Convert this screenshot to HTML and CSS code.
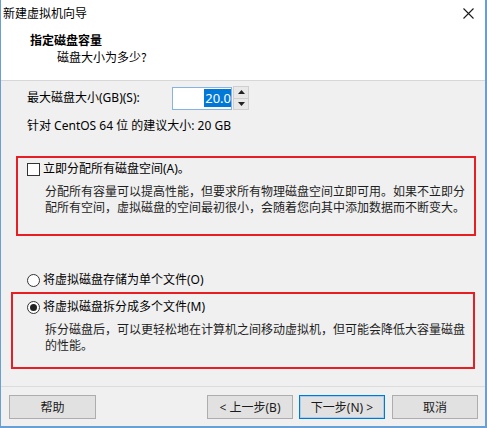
FILE: index.html
```html
<!DOCTYPE html>
<html lang="zh-CN">
<head>
<meta charset="utf-8">
<title>新建虚拟机向导</title>
<link rel="stylesheet" href="styles.css">
</head>
<body>
<div class="window">
  <div class="titlebar">
    <span class="title">新建虚拟机向导</span>
    <span class="close"><svg width="11" height="11" viewBox="0 0 11 11"><path d="M0.5 0.5 L10.5 10.5 M10.5 0.5 L0.5 10.5" stroke="#1a1a1a" stroke-width="1.1" fill="none"/></svg></span>
  </div>
  <div class="header">
    <div class="h-title">指定磁盘容量</div>
    <div class="h-sub">磁盘大小为多少?</div>
  </div>
  <div class="body">
    <div class="size-row">
      <span class="size-label">最大磁盘大小(GB)(S):</span>
      <div class="spin-input"><span class="sel">20.0</span></div>
      <div class="spin-btns">
        <div class="spin-btn"><svg width="7" height="4" viewBox="0 0 7 4"><path d="M0 4 L3.5 0 L7 4 Z" fill="#222"/></svg></div>
        <div class="spin-btn"><svg width="7" height="4" viewBox="0 0 7 4"><path d="M0 0 L3.5 4 L7 0 Z" fill="#222"/></svg></div>
      </div>
    </div>
    <div class="recommend">针对 CentOS 64 位 的建议大小: 20 GB</div>
    <div class="box box1">
      <div class="opt opt1"><span class="check"></span><span class="opt-label">立即分配所有磁盘空间(A)。</span></div>
      <div class="desc desc1">分配所有容量可以提高性能，但要求所有物理磁盘空间立即可用。如果不立即分<br>配所有空间，虚拟磁盘的空间最初很小，会随着您向其中添加数据而不断变大。</div>
    </div>
    <div class="opt radio-row"><span class="radio"></span><span class="opt-label">将虚拟磁盘存储为单个文件(O)</span></div>
    <div class="box box2">
      <div class="opt opt2"><span class="radio checked"></span><span class="opt-label">将虚拟磁盘拆分成多个文件(M)</span></div>
      <div class="desc desc2">拆分磁盘后，可以更轻松地在计算机之间移动虚拟机，但可能会降低大容量磁盘<br>的性能。</div>
    </div>
  </div>
  <div class="footer">
    <div class="btn btn-help">帮助</div>
    <div class="btn btn-prev">&lt; 上一步(B)</div>
    <div class="btn btn-next">下一步(N) &gt;</div>
    <div class="btn btn-cancel">取消</div>
  </div>
</div>
</body>
</html>
```
FILE: styles.css
```css
html, body {
  margin: 0;
  padding: 0;
  background: #ffffff;
}
body {
  font-family: "Noto Sans", "Noto Sans CJK SC", sans-serif;
  font-size: 12px;
  color: #000;
}
.window {
  width: 487px;
  height: 428px;
  box-sizing: border-box;
  border-left: 1px solid #6a9fd6;
  border-right: 2px solid #6a9fd6;
  border-bottom: 2px solid #6a9fd6;
  background: #f0f0f0;
  display: flex;
  flex-direction: column;
  overflow: hidden;
}
.titlebar {
  height: 26px;
  background: #fff;
  display: flex;
  align-items: center;
  justify-content: space-between;
  padding-left: 2px;
  padding-right: 11px;
}
.title {
  font-family: "Noto Sans CJK SC", sans-serif;
  font-size: 12px;
  line-height: 26px;
}
.close {
  display: flex;
}
.header {
  height: 55px;
  box-sizing: border-box;
  background: #fff;
  border-bottom: 1px solid #d7d7d7;
  padding-top: 6px;
}
.h-title {
  font-family: "Noto Sans CJK SC", sans-serif;
  font-weight: bold;
  line-height: 16px;
  padding-left: 29px;
}
.h-sub {
  font-family: "Noto Sans CJK SC", sans-serif;
  line-height: 16px;
  margin-top: 1px;
  padding-left: 56px;
}
.body {
  height: 306px;
  box-sizing: border-box;
  border-bottom: 1px solid #dcdcdc;
}
.size-row {
  display: flex;
  align-items: center;
  margin-top: 5px;
  height: 24px;
  padding-left: 26px;
}
.size-label {
  width: 145px;
  line-height: 16px;
}
.spin-input {
  width: 60px;
  height: 23px;
  box-sizing: border-box;
  border: 1px solid #86b3e2;
  background: #fff;
  display: flex;
  align-items: center;
  justify-content: flex-end;
}
.sel {
  background: #0078d7;
  color: #fff;
  font-family: "Noto Sans", sans-serif;
  font-size: 13px;
  line-height: 18px;
  padding: 0 0 0 1px;
}
.spin-btns {
  margin-left: 1px;
  width: 16px;
  height: 24px;
  display: flex;
  flex-direction: column;
}
.spin-btn {
  flex: 1;
  box-sizing: border-box;
  background: #e8e8e8;
  border: 1px solid #cfcfcf;
  display: flex;
  align-items: center;
  justify-content: center;
}
.spin-btn + .spin-btn {
  border-top: none;
}
.recommend {
  margin-top: 8px;
  line-height: 16px;
  padding-left: 26px;
}
.box {
  border: 2px solid #e81e25;
  box-sizing: border-box;
}
.box1 {
  margin-top: 22px;
  margin-left: 15px;
  width: 460px;
  height: 80px;
  padding-top: 3px;
}
.opt {
  display: flex;
  align-items: center;
  line-height: 16px;
  height: 16px;
}
.opt-label {
  margin-left: 3px;
}
.opt1 {
  padding-left: 9px;
}
.check {
  width: 13px;
  height: 13px;
  box-sizing: border-box;
  border: 1px solid #333;
  background: #fff;
}
.desc {
  color: #1e1e1e;
  line-height: 16px;
}
.desc1 {
  margin-top: 7px;
  padding-left: 27px;
}
.radio-row {
  margin-top: 36px;
  padding-left: 26px;
}
.radio {
  width: 13px;
  height: 13px;
  box-sizing: border-box;
  border: 1px solid #333;
  border-radius: 50%;
  background: #fff;
  display: flex;
  align-items: center;
  justify-content: center;
}
.radio.checked::after {
  content: "";
  width: 7px;
  height: 7px;
  border-radius: 50%;
  background: #222;
}
.box2 {
  margin-top: 4px;
  margin-left: 10px;
  width: 464px;
  height: 77px;
  padding-top: 5px;
}
.opt2 {
  padding-left: 14px;
}
.desc2 {
  margin-top: 7px;
  padding-left: 32px;
}
.footer {
  display: flex;
  padding-top: 8px;
  padding-left: 8px;
}
.btn {
  height: 24px;
  box-sizing: border-box;
  width: 86px;
  background: #e1e1e1;
  border: 1px solid #adadad;
  display: flex;
  align-items: center;
  justify-content: center;
  color: #1a1a1a;
}
.btn-help {
  width: 87px;
}
.btn-prev {
  margin-left: 111px;
}
.btn-next {
  margin-left: 6px;
  border: 1px solid #0078d7;
  box-shadow: inset 0 0 0 1px #a8cdee;
}
.btn-cancel {
  margin-left: 7px;
}
```
